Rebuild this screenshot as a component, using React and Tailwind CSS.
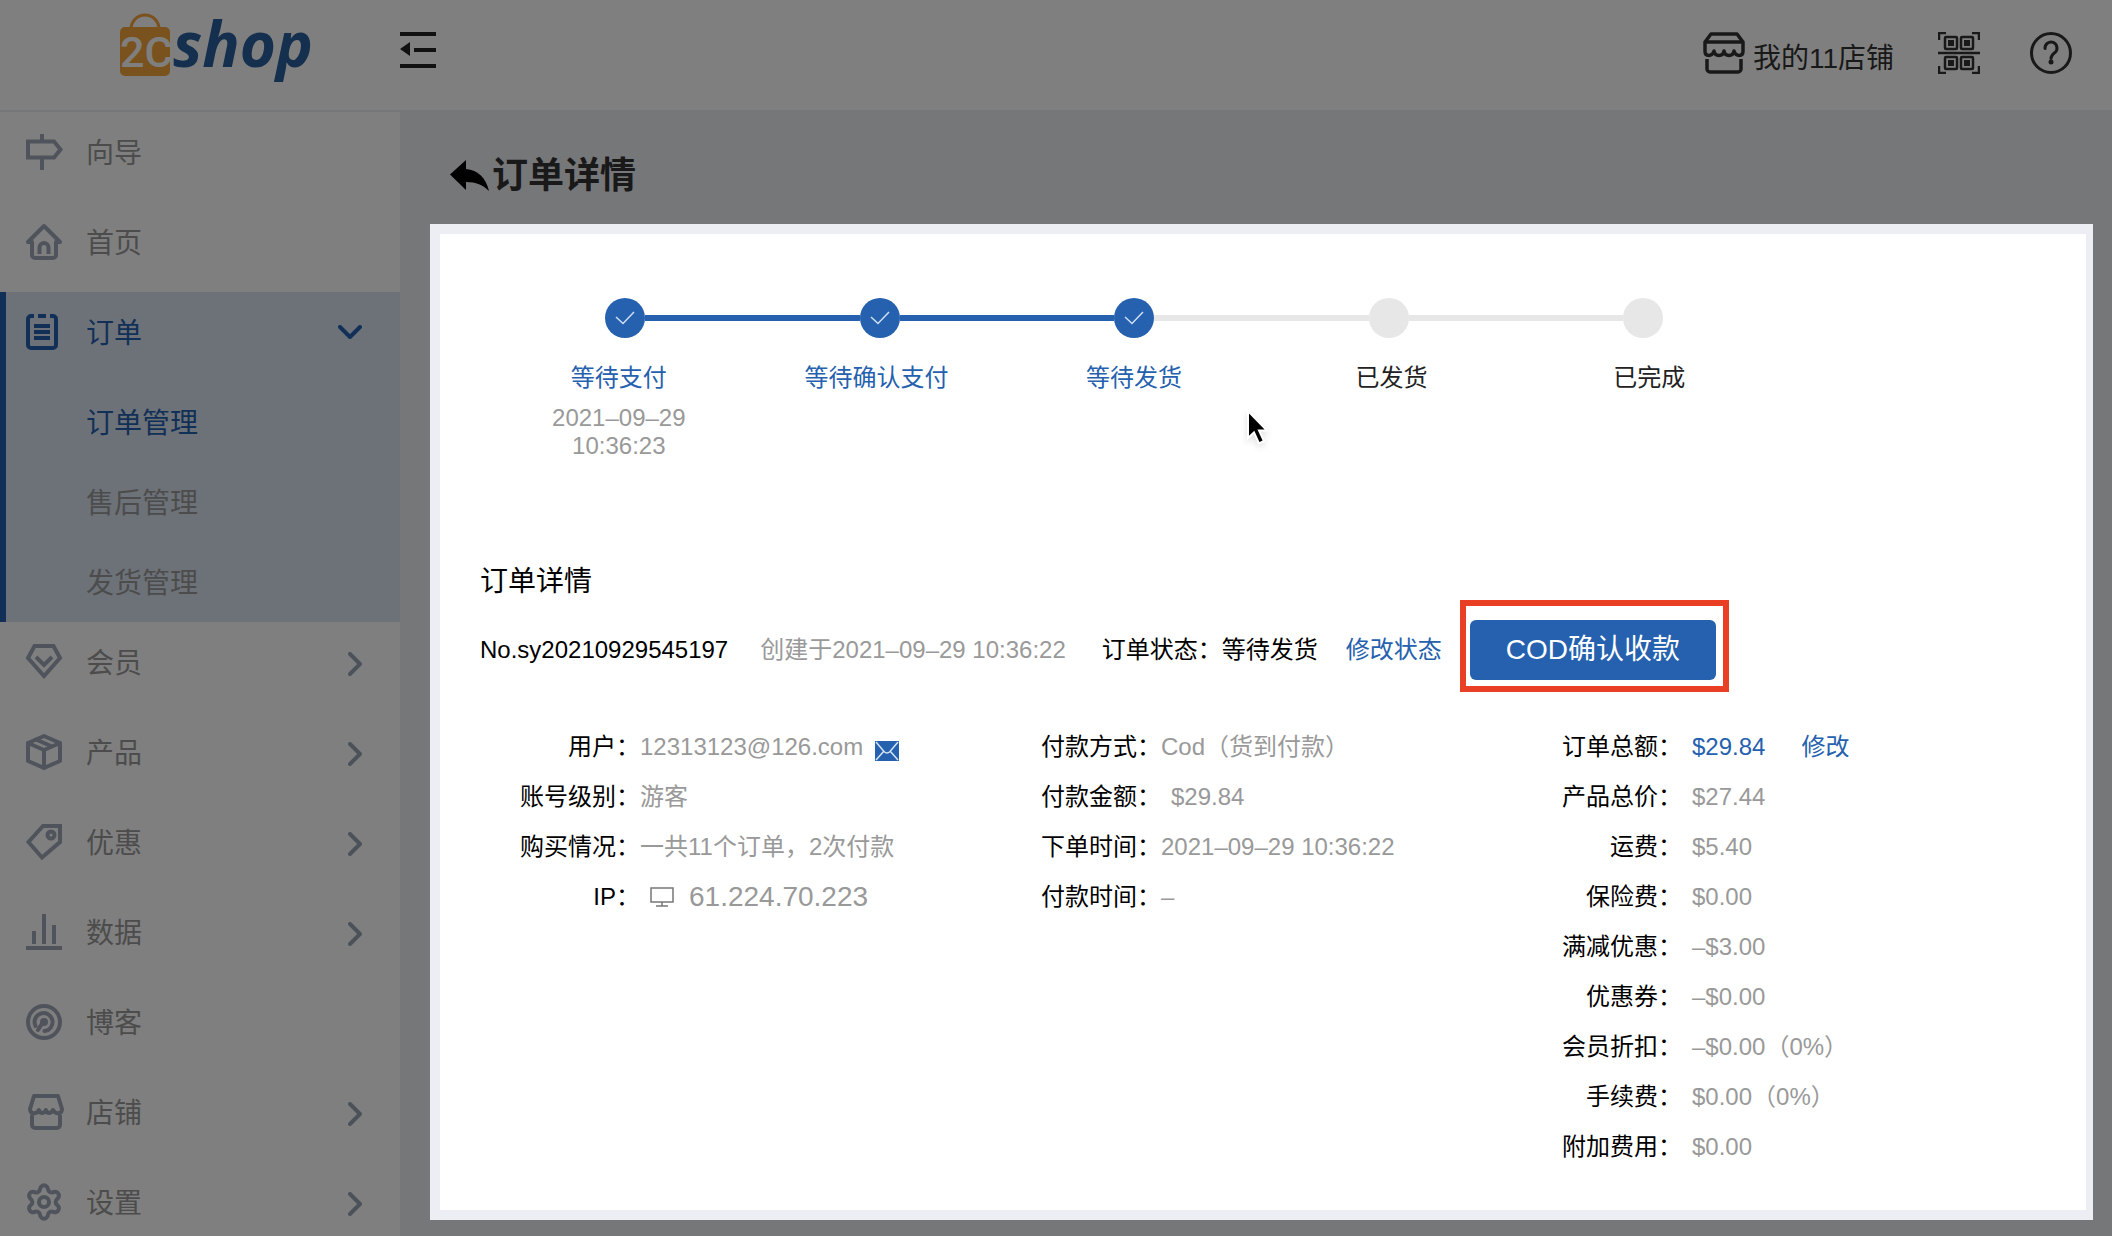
import { useState } from "react";
import { Settings } from "lucide-react";

const strokeProps = {
  fill: "none",
  stroke: "currentColor",
  strokeWidth: 4,
  strokeLinejoin: "round",
  strokeLinecap: "round"
};

const icons = {
  guide: (
    <g {...strokeProps} strokeLinejoin="miter" strokeLinecap="butt">
      <path d="M2 7.500h26l6.500 8L28 23.500H2z" />
      <path d="M16 0v7M16 24v12" />
    </g>
  ),
  home: (
    <g {...strokeProps}>
      <path d="M6 18v13a3 3 0 0 0 3 3h18a3 3 0 0 0 3-3V18h4L18 2 2 18z" />
      <path d="M13.500 30v-6.500a4.500 4.500 0 0 1 9 0V30" strokeLinecap="butt" />
    </g>
  ),
  order: (
    <g {...strokeProps} strokeLinecap="butt">
      <path d="M8 2H5a3 3 0 0 0-3 3v26a3 3 0 0 0 3 3h22a3 3 0 0 0 3-3V5a3 3 0 0 0-3-3h-3M12 2h8" />
      <path d="M8 12h16M8 18h16M8 24h16" />
    </g>
  ),
  member: (
    <g {...strokeProps} strokeLinejoin="miter" strokeLinecap="butt">
      <path d="M8.500 2h19L34 14 18 32 2 14z" />
      <path d="M10 13l8 8 8-8" />
    </g>
  ),
  product: (
    <g {...strokeProps}>
      <path d="M18 2l16 7v18l-16 7-16-7V9z" />
      <path d="M2 9l16 7 16-7M18 16v18M10 5.500l16 7" />
    </g>
  ),
  discount: (
    <g {...strokeProps} strokeLinejoin="miter">
      <path d="M17 2h17v16L16 33.500 2.500 18z" />
      <circle cx="25" cy="11" r="3.500" />
    </g>
  ),
  data: (
    <g {...strokeProps}>
      <path d="M0 34h36M8 17v13M18 0v30M28 11v19" strokeLinecap="butt" />
    </g>
  ),
  blog: (
    <g {...strokeProps}>
      <circle cx="18" cy="18" r="16" />
      <path d="M12 26l5-8M9.500 22a9 9 0 1 1 9 5" />
      <circle cx="18" cy="18" r="2" />
    </g>
  ),
  store: (
    <g {...strokeProps}>
      <path d="M8 2h24l4 13c0 5-6 6-9 1-2 4-6 4-7 0-2 4-6 4-7 0-3 5-9 4-9-1z" />
      <path d="M6 22v9a3 3 0 0 0 3 3h22a3 3 0 0 0 3-3v-9" />
    </g>
  ),
  settings: <Settings x={-2} y={-2} size={40} strokeWidth={2.4} />
};

const menu = [
  { key: "guide", label: "向导" },
  { key: "home", label: "首页" },
  { key: "order", label: "订单", children: ["订单管理", "售后管理", "发货管理"] },
  { key: "member", label: "会员", arrow: true },
  { key: "product", label: "产品", arrow: true },
  { key: "discount", label: "优惠", arrow: true },
  { key: "data", label: "数据", arrow: true },
  { key: "blog", label: "博客" },
  { key: "store", label: "店铺", arrow: true },
  { key: "settings", label: "设置", arrow: true }
];

const steps = [
  { label: "等待支付", done: true, date: "2021–09–29", time: "10:36:23" },
  { label: "等待确认支付", done: true },
  { label: "等待发货", done: true },
  { label: "已发货", done: false },
  { label: "已完成", done: false }
];

const fees = [
  ["产品总价：", "$27.44"],
  ["运费：", "$5.40"],
  ["保险费：", "$0.00"],
  ["满减优惠：", "–$3.00"],
  ["优惠券：", "–$0.00"],
  ["会员折扣：", "–$0.00（0%）"],
  ["手续费：", "$0.00（0%）"],
  ["附加费用：", "$0.00"]
];

const Logo = () => (
  <svg width="240" height="96" viewBox="0 -12 240 96" role="img" aria-label="2Cshop">
    <path d="M11 17a14 14 0 0 1 28 0" fill="none" stroke="#f5a43c" strokeWidth="3" />
    <rect y="15" width="50" height="49" rx="5" fill="#f5a43c" />
    <text x="0" y="55" fontFamily="Roboto, sans-serif" fontWeight="500" fontSize="43" fill="#fff">
      2C
    </text>
    <text x="53" y="55" fontFamily="Open Sans, sans-serif" fontWeight="700" fontStyle="italic" fontSize="62" fill="#29609c">
      shop
    </text>
  </svg>
);

const Header = () => (
  <header className="flex h-28 shrink-0 items-start border-b-2 border-[#edeef2] bg-white pr-10 text-[#333]">
    <div className="w-[400px] pl-[120px]">
      <Logo />
    </div>
    <button type="button" aria-label="收起菜单" className="mt-8">
      <svg width="36" height="36" viewBox="0 0 36 36" fill="#222">
        <path d="M0 0h36v4H0zM14 16h22v4H14zM0 32h36v4H0zM0 17l10-7v14z" />
      </svg>
    </button>

    <div className="ml-auto flex pt-8">
      <button type="button" className="flex items-start gap-2 text-[28px] leading-[54px]">
        <svg width="42" height="42" viewBox="0 0 42 42" fill="none" stroke="currentColor" strokeWidth="3.500" strokeLinejoin="round">
          <path d="M8 2h26l6 8v9c0 6-7 6-9 0-1 6-9 6-10 0-1 6-9 6-10 0-2 6-9 6-9 0v-9zM2 10h38" />
          <path d="M4 27v10a3 3 0 0 0 3 3h28a3 3 0 0 0 3-3V27" />
        </svg>
        我的11店铺
      </button>
      <button type="button" aria-label="二维码" className="ml-11 self-start">
        <svg width="42" height="42" viewBox="0 0 42 42" fill="none" stroke="currentColor" strokeWidth="2.500">
          <path d="M1 8V1h7M34 1h7v7M41 34v7h-7M8 41H1v-7M0 21h42" />
          <rect x="7" y="5" width="12" height="12" rx="1" />
          <rect x="23" y="5" width="12" height="12" rx="1" />
          <rect x="7" y="25" width="12" height="12" rx="1" />
          <rect x="23" y="25" width="12" height="12" rx="1" />
          <path d="M10 11h6M26 11h6M10 31h6M26 31h6" strokeWidth="6" />
        </svg>
      </button>
      <button type="button" aria-label="帮助" className="ml-[50px] self-start">
        <svg width="42" height="42" viewBox="0 0 42 42" fill="none" stroke="currentColor" strokeWidth="3">
          <circle cx="21" cy="21" r="19.500" />
          <path d="M15 16.500a6 6 0 1 1 10 4c-3 2.500-4 3-4 6" strokeLinecap="round" />
          <circle cx="21" cy="30" r="2.500" fill="currentColor" stroke="none" />
        </svg>
      </button>
    </div>
  </header>
);

const Sidebar = () => {
  const [current, setCurrent] = useState("订单管理");

  return (
    <aside className="w-[400px] shrink-0 overflow-hidden bg-white text-[28px] text-[#999]">
      <nav>
        {menu.map((item) => (
          <div key={item.key} className={item.children ? "border-l-6 border-[#2561ae] bg-[#dbe4f1]" : "mb-[10px] border-l-6 border-transparent"}>
            <a
              href="#"
              className={`flex h-20 items-center pl-5 pr-[38px] pt-1 ${item.children ? "mb-[10px] text-[#2561ae]" : ""}`}
            >
              <svg
                width="36"
                height="36"
                viewBox="0 0 36 36"
                className={`mb-1 overflow-visible ${item.children ? "" : "text-[#9fa7b7]"}`}
              >
                {icons[item.key]}
              </svg>
              <span className="ml-6">{item.label}</span>
              {item.arrow && (
                <svg width="14" height="24" viewBox="0 0 14 24" className="ml-auto text-[#98a5b5]">
                  <path d="M2 2l10 10L2 22" {...strokeProps} />
                </svg>
              )}
              {item.children && (
                <svg width="24" height="14" viewBox="0 0 24 14" className="mb-1 ml-auto">
                  <path d="M2 2l10 10L22 2" {...strokeProps} />
                </svg>
              )}
            </a>
            {item.children?.map((child) => (
              <a
                key={child}
                href="#"
                onClick={() => setCurrent(child)}
                className={`flex h-20 items-center pl-20 pt-1 ${current === child ? "text-[#2561ae]" : ""}`}
              >
                {child}
              </a>
            ))}
          </div>
        ))}
      </nav>
    </aside>
  );
};

const Steps = () => (
  <div className="ml-[50px] mr-[308px]">
    <div className="flex items-center px-[115px]">
      {steps.map((step, index) => (
        <div key={step.label} className={index === 0 ? "flex items-center" : "flex flex-1 items-center"}>
          {index > 0 && <div className={`h-[6px] flex-1 ${step.done ? "bg-[#2561ae]" : "bg-[#e7e7e7]"}`} />}
          <div className={`flex size-10 items-center justify-center rounded-full ${step.done ? "bg-[#2561ae]" : "bg-[#e7e7e7]"}`}>
            {step.done && (
              <svg width="20" height="14" viewBox="0 0 20 14" fill="none" stroke="#cfe0f5" strokeWidth="1.500">
                <path d="M1 6l7 6.500L19 1" />
              </svg>
            )}
          </div>
        </div>
      ))}
    </div>
    <ol className="mt-[22px] grid grid-cols-5 text-center">
      {steps.map((step) => (
        <li key={step.label}>
          <p className={`leading-9 ${step.done ? "text-[#2561ae]" : "text-[#222]"}`}>{step.label}</p>
          {step.date && (
            <p className="mt-2 leading-7 text-[#999]">
              {step.date}
              <br />
              {step.time}
            </p>
          )}
        </li>
      ))}
    </ol>
  </div>
);

const Row = ({ label, gap, children }) => (
  <div className={`flex h-[50px] items-center ${gap ? "gap-[10px]" : ""}`}>
    <dt className="w-40 shrink-0 text-right">{label}</dt>
    <dd className="flex items-center whitespace-nowrap text-[#999]">{children}</dd>
  </div>
);

const App = () => {
  return (
    <div className="relative flex h-screen flex-col overflow-hidden bg-[#edeef2] font-['Liberation_Sans','Noto_Sans_CJK_SC',sans-serif]">
      <Header />
      <div className="flex min-h-0 flex-1">
        <Sidebar />
        <main className="flex min-w-0 flex-1 flex-col pb-4 pl-[30px] pr-[19px]">
          <div className="flex h-28 items-center gap-[2px] pl-5 pt-4">
            <a href="#" aria-label="返回">
              <svg width="40" height="32" viewBox="0 0 40 32">
                <path d="M0 14.500L16 0v9c12 1 20 9 23 22-6-6-13-9-23-9v8z" fill="#000" />
              </svg>
            </a>
            <h1 className="text-4xl font-bold text-[#333]">订单详情</h1>
          </div>

          {/* the wide shadow dims everything around the card */}
          <section className="relative z-10 flex-1 border-10 border-r-7 border-[#edeef3] bg-white pt-16 text-2xl text-black shadow-[0_0_0_3000px_rgba(0,0,0,0.5)]">
            <Steps />

            <div className="mt-[104px] pl-10 pr-[43px]">
              <h2 className="text-[28px] leading-9">订单详情</h2>

              <div className="mt-5 flex h-[60px] items-center whitespace-nowrap">
                <span>No.sy20210929545197</span>
                <span className="ml-8 text-[#999]">创建于2021–09–29 10:36:22</span>
                <span className="ml-9">订单状态：等待发货</span>
                <a href="#" className="ml-7 text-[#2561ae]">修改状态</a>
                <div className="relative ml-7">
                  <button type="button" className="h-[60px] w-[246px] rounded-md bg-[#2561ae] text-[28px] text-white">
                    COD确认收款
                  </button>
                  <div className="pointer-events-none absolute -bottom-3 -left-[10px] -right-[13px] -top-5 border-6 border-[#e94025]" />
                </div>
              </div>

              <div className="mt-[42px] grid grid-cols-3">
                <dl>
                  <Row label="用户：">
                    12313123@126.com
                    <svg width="24" height="20" viewBox="0 0 24 20" className="ml-3 mt-2">
                      <path d="M0 0h24v20H0z" fill="#2561ae" />
                      <path d="M1 1l8 9.500c2 2 4 2 6 0L23 1M1 19l8-9M23 19l-8-9" fill="none" stroke="#d5e4f7" strokeWidth="1.500" />
                    </svg>
                  </Row>
                  <Row label="账号级别：">游客</Row>
                  <Row label="购买情况：">一共11个订单，2次付款</Row>
                  <Row label="IP：">
                    <svg width="24" height="20" viewBox="0 0 24 20" className="ml-[10px] mr-[15px]" fill="none" stroke="#777" strokeWidth="1.500">
                      <path d="M1 1h22v14H1zM12 15v4M6 19h12" />
                    </svg>
                    <span className="text-[28px]">61.224.70.223</span>
                  </Row>
                </dl>
                <dl>
                  <Row label="付款方式：">Cod（货到付款）</Row>
                  <Row label="付款金额：">
                    <span className="ml-[10px]">$29.84</span>
                  </Row>
                  <Row label="下单时间：">2021–09–29 10:36:22</Row>
                  <Row label="付款时间：">–</Row>
                </dl>
                <dl>
                  <Row label="订单总额：" gap>
                    <span className="text-[#2561ae]">$29.84</span>
                    <a href="#" className="ml-9 text-[#2561ae]">修改</a>
                  </Row>
                  {fees.map(([label, value]) => (
                    <Row key={label} label={label} gap>{value}</Row>
                  ))}
                </dl>
              </div>
            </div>

            <svg width="26" height="38" viewBox="0 0 26 38" className="absolute left-[806px] top-[175px] drop-shadow-md">
              <path d="M2 2v27l6-5.500 5 11 5-2.500-5-10.500h8z" fill="#000" stroke="#fff" strokeWidth="2" />
            </svg>
          </section>
        </main>
      </div>
    </div>
  );
};

export default App;
